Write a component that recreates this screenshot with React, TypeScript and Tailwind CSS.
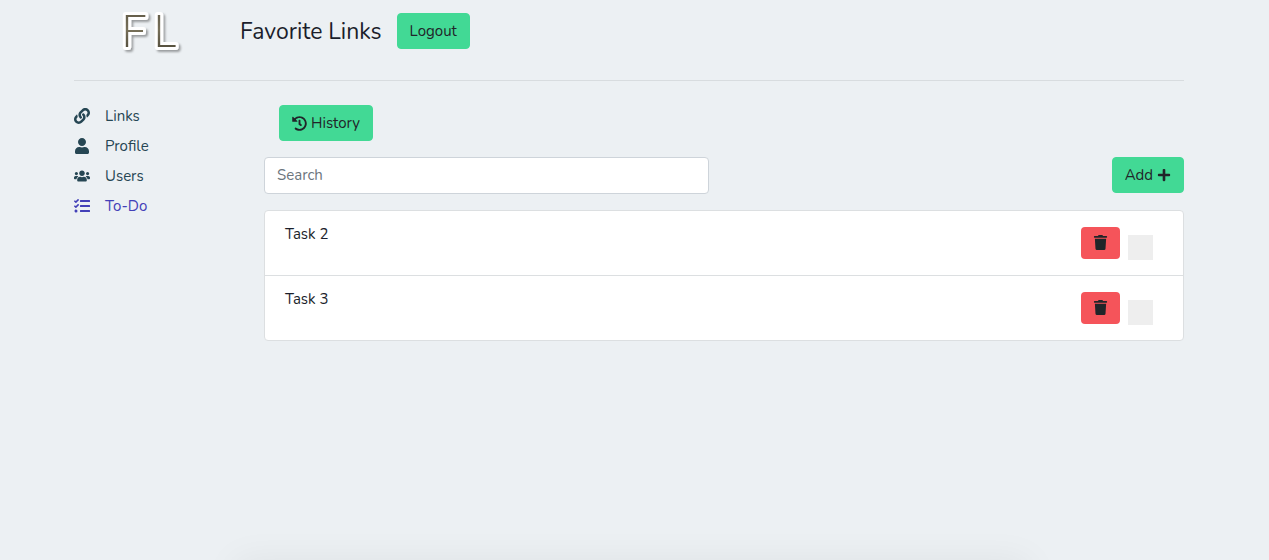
import React, { useState } from "react";
import {
  FaHistory,
  FaLink,
  FaPlus,
  FaTasks,
  FaTrash,
  FaUser,
  FaUsers,
} from "react-icons/fa";

const navItems = [
  { name: "Links", icon: FaLink },
  { name: "Profile", icon: FaUser },
  { name: "Users", icon: FaUsers },
  { name: "To-Do", icon: FaTasks, active: true },
];

const Logo = () => (
  <svg width="76" height="72" viewBox="0 0 76 72" role="img" aria-label="FL">
    <defs>
      <linearGradient id="gold" x1="0" y1="0" x2="0" y2="1">
        <stop offset="0" stopColor="#55503f" />
        <stop offset="0.5" stopColor="#77705a" />
        <stop offset="1" stopColor="#454030" />
      </linearGradient>
      <filter id="logoShadow" x="-20%" y="-20%" width="140%" height="140%">
        <feDropShadow dx="2" dy="2" stdDeviation="1" floodColor="#000" floodOpacity="0.35" />
      </filter>
    </defs>
    <g
      className="font-[Lato,sans-serif] text-[46px] font-light"
      fill="url(#gold)"
      stroke="#fff"
      strokeWidth="6"
      strokeLinejoin="round"
      paintOrder="stroke"
      filter="url(#logoShadow)"
    >
      <text x="7" y="47">F</text>
      <text x="39" y="47">L</text>
    </g>
  </svg>
);

const Button = ({ children }: { children: React.ReactNode }) => (
  <button
    type="button"
    className="flex h-9 items-center gap-1 rounded bg-[#42d995] px-3 text-[#212529] border border-[#42d995]"
  >
    {children}
  </button>
);

const Task = ({ title }: { title: string }) => {
  const [done, setDone] = useState(false);
  return (
    <li className="flex h-[65px] items-start border-b border-[#dcdfe1] pl-5 pr-[30px] last:h-16 last:border-b-0">
      <span className="grow pt-[11px]">{title}</span>
      <button
        type="button"
        aria-label={`Delete ${title}`}
        className="mr-2 mt-4 flex h-8 w-[39px] items-center justify-center rounded bg-[#f5545a] pb-px text-[#212529]"
      >
        <FaTrash size={15} />
      </button>
      <input
        type="checkbox"
        aria-label={`Complete ${title}`}
        checked={done}
        onChange={() => setDone(!done)}
        className="mt-6 size-[25px] appearance-none bg-[#eee] checked:bg-[#42d995]"
      />
    </li>
  );
};

const App = () => {
  return (
    <div className="min-h-screen bg-[#ecf0f3] pr-[11px] font-[Nunito,Lato,sans-serif] text-[15px] leading-6 text-[#1b1e2b]">
      <div className="mx-auto max-w-[1110px]">
        <header className="flex h-[81px] items-start border-b border-[#d8dcdf]">
          <div className="w-[166px] shrink-0 pl-10">
            <Logo />
          </div>
          <h1 className="mr-[15px] pt-[14px] text-[23px] leading-9">Favorite Links</h1>
          <div className="pt-[13px]">
            <Button>Logout</Button>
          </div>
        </header>
        <div className="flex pt-5">
          <nav className="w-[190px] shrink-0">
            <ul>
              {navItems.map(({ name, icon: Icon, active }) => (
                <li key={name}>
                  <a
                    href="#"
                    className={
                      active
                        ? "flex h-[30px] items-center gap-[15px] text-[#4340b8]"
                        : "flex h-[30px] items-center gap-[15px] text-[#264653]"
                    }
                  >
                    <Icon size={16} />
                    {name}
                  </a>
                </li>
              ))}
            </ul>
          </nav>
          <main className="min-w-0 grow pt-1">
            <div className="mb-4 flex pl-[15px]">
              <Button>
                <FaHistory size={15} />
                History
              </Button>
            </div>
            <div className="mb-4 flex items-start justify-between">
              <input
                type="text"
                placeholder="Search"
                aria-label="Search"
                className="h-[37px] w-[445px] rounded border border-[#ced4da] bg-white px-3 pb-0.5 placeholder:text-[#6c757d]"
              />
              <Button>
                Add
                <FaPlus size={14} />
              </Button>
            </div>
            <ul className="rounded border border-[#dcdfe1] bg-white">
              <Task title="Task 2" />
              <Task title="Task 3" />
            </ul>
          </main>
        </div>
      </div>
      {/* panel parked under the fold, only its shadow is seen */}
      <div className="pointer-events-none fixed left-[235px] right-[240px] top-full h-20 shadow-[0_0_36px_rgba(0,0,0,0.06)]" />
    </div>
  );
};

export default App;
